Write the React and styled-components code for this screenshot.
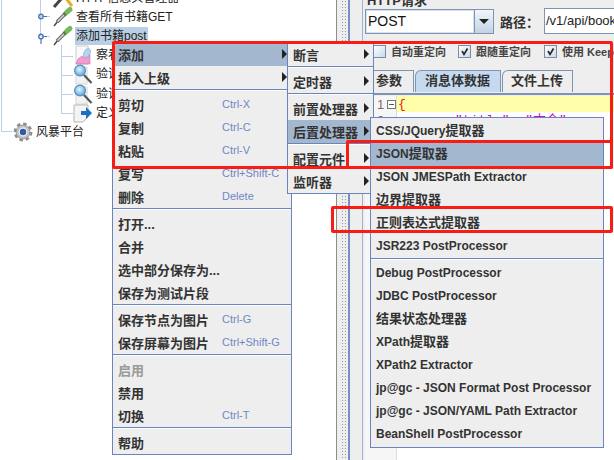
import React from 'react';
import styled, { createGlobalStyle } from 'styled-components';

const SANS = `"Liberation Sans", "Noto Sans CJK SC", sans-serif`;
const MENU_BORDER = '#6a84bf';

const Global = createGlobalStyle`
  html, body { margin: 0; padding: 0; background: #fff; overflow: hidden; }
  body { font-family: ${SANS}; }
`;

const Page = styled.div`
  position: relative;
  width: 614px;
  height: 460px;
  overflow: hidden;
  display: flex;
  background: #fff;
`;

/* left tree */
const TreePane = styled.div`
  position: relative;
  flex: none;
  background: #fff;
  border-right: 1px solid #8d8d8d;
  box-sizing: border-box;
  width: 337px;
`;
const TreeLines = styled.svg`
  position: absolute;
  left: 0;
  top: 0;
`;
const TreeList = styled.div`
  position: relative;
  margin-top: -12px;
  display: flex;
  flex-direction: column;
`;
const TreeRow = styled.div`
  display: flex;
  align-items: center;
  height: 19.2px;
  gap: 2px;
  padding-left: ${(p) => [13, 33, 53, 73][p.$depth]}px;
`;
const IconBox = styled.svg`
  width: 20px;
  height: 20px;
  flex: none;
  overflow: visible;
`;
const TreeLabel = styled.span`
  font-size: 12px;
  line-height: 18px;
  padding: 0 1px;
  color: #222;
  white-space: nowrap;
  background: ${(p) => (p.$selected ? '#b8cfe5' : 'transparent')};
`;

/* split bar */
const Splitter = styled.div`
  width: 25px;
  flex: none;
  display: flex;
  background: #eee;
`;
const SplitGrip = styled.div`
  width: 5px;
  margin-left: 4px;
  background-image: radial-gradient(#9a9a9a 0.8px, transparent 1px);
  background-size: 3px 3px;
`;
const SplitLine = styled.div`
  width: 2px;
  margin-left: 2px;
  background: #7a90c4;
`;

/* right form */
const FormPane = styled.div`
  flex: 1;
  min-width: 0;
  display: flex;
  flex-direction: column;
  background: #eee;
  padding-left: 2px;
  border-left: 1px solid #9fb2d4;
  overflow: hidden;
`;
const PaneTitle = styled.div`
  height: 8px;
  display: flex;
  align-items: flex-end;
  font-size: 13px;
  font-weight: 700;
  line-height: 15px;
  color: #333;
  padding-left: 2px;
  white-space: nowrap;
`;
const MethodRow = styled.div`
  display: flex;
  align-items: center;
  height: 26px;
`;
const ComboField = styled.div`
  width: 110px;
  height: 25px;
  flex: none;
  box-sizing: border-box;
  border: 1px solid #7f93b3;
  box-shadow: inset 0 0 0 1px #d8e2ee;
  background: #fff;
  font-size: 14px;
  line-height: 23px;
  padding-left: 2px;
  color: #111;
`;
const ComboButton = styled.div`
  width: 19px;
  height: 25px;
  flex: none;
  box-sizing: border-box;
  border: 1px solid #7f93b3;
  border-left: none;
  background: linear-gradient(#f2f6fa, #c3d3e4);
  display: flex;
  align-items: center;
  justify-content: center;
  &::after {
    content: '';
    border-left: 5px solid transparent;
    border-right: 5px solid transparent;
    border-top: 5px solid #222;
  }
`;
const PathLabel = styled.span`
  font-size: 13px;
  font-weight: 700;
  color: #333;
  margin-left: 6px;
  width: 44px;
  flex: none;
  white-space: nowrap;
`;
const PathField = styled.div`
  flex: none;
  width: 100px;
  height: 26px;
  box-sizing: border-box;
  border: 1px solid #7f93b3;
  background: #fff;
  font-size: 13px;
  line-height: 24px;
  padding-left: 1px;
  color: #222;
  white-space: nowrap;
`;
const OptionRow = styled.div`
  display: flex;
  align-items: center;
  height: 14px;
  margin-top: 10px;
  padding-left: 8px;
`;
const Option = styled.span`
  display: flex;
  align-items: center;
  gap: 5px;
  width: ${(p) => p.$width}px;
  flex: none;
  font-size: 11px;
  font-weight: 700;
  color: #444;
  white-space: nowrap;
`;
const Tick = styled.span`
  width: 13px;
  height: 13px;
  flex: none;
  box-sizing: border-box;
  border: 1px solid #7c8ca4;
  background: linear-gradient(135deg, #fff, #c9d9ea);
  display: flex;
  svg { display: block; }
`;
const TabRow = styled.div`
  display: flex;
  align-items: flex-start;
  height: 22px;
  margin-top: 12px;
  padding-bottom: 1px;
  border-bottom: 2px solid #7f93b3;
`;
const Tab = styled.div`
  height: 22px;
  box-sizing: border-box;
  width: ${(p) => p.$width}px;
  flex: none;
  margin-right: 1px;
  padding-left: ${(p) => p.$pad}px;
  border: 1px solid #7f93b3;
  border-bottom: none;
  border-top-left-radius: 6px;
  background: ${(p) => (p.$active ? '#c6daef' : '#eee')};
  font-size: 13px;
  font-weight: 700;
  line-height: 20px;
  color: #333;
  white-space: nowrap;
`;
const Editor = styled.div`
  flex: 1;
  margin-top: 1px;
  background: #fff;
  display: grid;
  grid-template-columns: 32px 1fr;
  grid-auto-rows: 16px;
  align-content: start;
  position: relative;
  overflow: hidden;
`;
const Gutter = styled.div`
  display: flex;
  align-items: center;
  gap: 3px;
  padding-left: 12px;
  font-size: 13px;
  color: #866;
  border-right: 1px solid #ddd;
  background: #f6f6f6;
`;
const FoldBox = styled.span`
  width: 7px;
  height: 7px;
  border: 1px solid #777;
  background: #fff;
  position: relative;
  &::after {
    content: '';
    position: absolute;
    left: 1px;
    right: 1px;
    top: 3px;
    height: 1px;
    background: #555;
  }
`;
const CodeLine = styled.div`
  font-family: "Liberation Mono", "Noto Sans CJK SC", monospace;
  font-size: 13px;
  line-height: 17px;
  white-space: pre;
  padding-left: ${(p) => p.$indent}px;
  color: ${(p) => p.$color};
  background: ${(p) => (p.$highlight ? '#ffffaa' : 'transparent')};
`;
const GutterFill = styled.div`
  grid-column: 1;
  grid-row: 3 / span 30;
  background: #f6f6f6;
  border-right: 1px solid #ddd;
`;

/* popup menus */
const Menu = styled.div`
  position: absolute;
  left: ${(p) => p.$left}px;
  top: ${(p) => p.$top}px;
  width: ${(p) => p.$width}px;
  box-sizing: border-box;
  display: flex;
  flex-direction: column;
  background: #eee;
  border: 1px solid ${MENU_BORDER};
  padding-top: ${(p) => p.$padTop || 0}px;
  padding-bottom: ${(p) => p.$padBottom || 0}px;
  font-family: ${SANS};
`;
const Item = styled.div`
  height: 23px;
  box-sizing: border-box;
  flex: none;
  display: flex;
  align-items: center;
  padding: 0 4px 1px 5px;
  background: ${(p) => (p.$selected ? '#a3b8cf' : 'transparent')};
  color: ${(p) => (p.$disabled ? '#999' : '#333')};
  font-size: 13px;
  font-weight: 700;
  white-space: nowrap;
`;
const LatinItem = styled(Item)`
  font-size: 12px;
  display: block;
  line-height: 22px;
`;
const CjkRun = styled.span`
  font-size: 13px;
`;
const Label = styled.span`
  width: ${(p) => (p.$fixed ? '104px' : 'auto')};
  flex: none;
`;
const Shortcut = styled.span`
  font-size: 11px;
  font-weight: 400;
  color: #6f87c6;
`;
const Arrow = styled.span`
  margin-left: auto;
  border-top: 5px solid transparent;
  border-bottom: 5px solid transparent;
  border-left: 5px solid #222;
`;
const Separator = styled.div`
  height: 4px;
  flex: none;
  box-sizing: border-box;
  border-top: 1px solid ${MENU_BORDER};
  box-shadow: inset 0 1px 0 #fff;
`;

/* red hand-drawn annotation boxes */
const RedBox = styled.div`
  position: absolute;
  left: ${(p) => p.$left}px;
  top: ${(p) => p.$top}px;
  width: ${(p) => p.$width}px;
  height: ${(p) => p.$height}px;
  box-sizing: border-box;
  border: 3px solid #f81c14;
  border-radius: 2px;
  pointer-events: none;
`;

const Pipette = () => (
  <IconBox viewBox="0 0 20 20">
    <path d="M1 19 L5 14" stroke="#444" strokeWidth="1.4" />
    <path d="M4 15 L12 7" stroke="#666" strokeWidth="3.6" />
    <path d="M4.5 14.5 L11.5 7.5" stroke="#d8d8d8" strokeWidth="1.5" />
    <path d="M11 8 L14 5" stroke="#4f7f3b" strokeWidth="4" />
    <path d="M14 5 L17 2.5" stroke="#79b75c" strokeWidth="5" strokeLinecap="round" />
  </IconBox>
);
const Hammer = () => (
  <IconBox viewBox="0 0 20 20">
    <path d="M8 4 L19 18" stroke="#e2b024" strokeWidth="3" />
    <path d="M1 19 L9 10" stroke="#444" strokeWidth="3" />
  </IconBox>
);
const ChartDoc = () => (
  <IconBox viewBox="0 0 20 20">
    <path d="M3 1 H15 V19 H3 Z" fill="#fafafa" stroke="#ccc" />
    <path d="M3 19 L5 14 L9 11 L12 13 L17 9 V19 Z" fill="#f39bd0" stroke="#b0609a" strokeWidth=".5" />
    <ellipse cx="14" cy="8" rx="3" ry="4.6" fill="#b4d8f2" stroke="#7da9cc" strokeWidth=".6" transform="rotate(25 14 8)" />
  </IconBox>
);
const Magnifier = () => (
  <IconBox viewBox="0 0 20 20">
    <defs>
      <radialGradient id="glass" cx="45%" cy="40%" r="60%">
        <stop offset="0" stopColor="#e4f6ff" />
        <stop offset="1" stopColor="#5aa9dc" />
      </radialGradient>
    </defs>
    <path d="M3 3 H14 V20 H3 Z" fill="#f2f2f2" stroke="#d6d6d6" />
    <circle cx="7" cy="6.5" r="5.4" fill="url(#glass)" stroke="#4d8fb8" strokeWidth="1.1" />
    <path d="M11 11 L18.5 19" stroke="#555" strokeWidth="2.2" />
  </IconBox>
);
const ArrowDoc = () => (
  <IconBox viewBox="0 0 20 20">
    <path d="M1 2 H15 V14 L10 19 H1 Z" fill="#f4f4f4" stroke="#b5b5b5" />
    <path d="M8 8 H13 V4 L19 10 L13 16 V12 H8 Z" fill="#1e6fc4" />
  </IconBox>
);
const Gear = () => (
  <IconBox viewBox="0 0 20 20">
    <circle cx="10" cy="10" r="7.4" fill="none" stroke="#8f8f8f" strokeWidth="4" strokeDasharray="3.2 2.6" />
    <circle cx="10" cy="10" r="7" fill="#c4c4c4" stroke="#8a8a8a" strokeWidth=".8" />
    <circle cx="10" cy="10" r="4.4" fill="#eef2f8" />
    <circle cx="10" cy="10" r="3.2" fill="#2f5aa8" />
  </IconBox>
);

const CheckMark = () => (
  <svg width="11" height="11" viewBox="0 0 11 11" fill="none">
    <path d="M3 5 L5 8.5 L8.5 2.5" stroke="#222" strokeWidth="1.6" />
  </svg>
);

const treeRows = [
  { depth: 2, Icon: Hammer, label: 'HTTP信息头管理器' },
  { depth: 2, Icon: Pipette, label: '查看所有书籍GET' },
  { depth: 2, Icon: Pipette, label: '添加书籍post', selected: true },
  { depth: 3, Icon: ChartDoc, label: '察看结果树' },
  { depth: 3, Icon: Magnifier, label: '验证响应' },
  { depth: 3, Icon: Magnifier, label: '验证响应' },
  { depth: 3, Icon: ArrowDoc, label: '定义变量' },
  { depth: 0, Icon: Gear, label: '风暴平台' },
];

const mainMenu = [
  [{ label: '添加', sub: true, selected: true }, { label: '插入上级', sub: true }],
  [
    { label: '剪切', key: 'Ctrl-X' },
    { label: '复制', key: 'Ctrl-C' },
    { label: '粘贴', key: 'Ctrl-V' },
    { label: '复写', key: 'Ctrl+Shift-C' },
    { label: '删除', key: 'Delete' },
  ],
  [{ label: '打开...' }, { label: '合并' }, { label: '选中部分保存为...' }, { label: '保存为测试片段' }],
  [
    { label: '保存节点为图片', key: 'Ctrl-G' },
    { label: '保存屏幕为图片', key: 'Ctrl+Shift-G' },
  ],
  [{ label: '启用', disabled: true }, { label: '禁用' }, { label: '切换', key: 'Ctrl-T' }],
  [{ label: '帮助' }],
];

const addMenu = [
  ['断言'],
  ['定时器'],
  ['前置处理器', '后置处理器'],
  ['配置元件', '监听器'],
];

const postMenu = [
  ['CSS/JQuery提取器', 'JSON提取器', 'JSON JMESPath Extractor', '边界提取器', '正则表达式提取器', 'JSR223 PostProcessor'],
  [
    'Debug PostProcessor',
    'JDBC PostProcessor',
    '结果状态处理器',
    'XPath提取器',
    'XPath2 Extractor',
    'jp@gc - JSON Format Post Processor',
    'jp@gc - JSON/YAML Path Extractor',
    'BeanShell PostProcessor',
  ],
];

// the Latin part of these labels is a size smaller than the Chinese part
const mixedLabel = (label) =>
  label.split(/([\u4e00-\u9fff]+)/).map((part, i) =>
    i % 2 ? <CjkRun key={i}>{part}</CjkRun> : part
  );

const App = () => (
  <Page>
    <Global />
    <TreePane>
      <TreeLines width="336" height="140" fill="none">
        <path d="M1.5 0 V131.5 H12" stroke="#b8d0e8" />
        <path d="M40.5 0 V36 M41 16.5 H50" stroke="#b8d0e8" />
        <path d="M61.5 45 V113.5 M61 56.5 H73 M61 75.5 H73 M61 94.5 H73 M61 113.5 H73" stroke="#b8d0e8" />
        <path d="M41 36.5 H50" stroke="#b8d0e8" />
        <circle cx="41" cy="16.5" r="2.2" stroke="#4f74b4" strokeWidth="1.4" />
        <path d="M44 16.5 H47" stroke="#4f74b4" />
        <circle cx="41" cy="36.5" r="2.2" stroke="#4f74b4" strokeWidth="1.4" />
        <path d="M41 39 V44 M44 36.5 H47" stroke="#4f74b4" strokeWidth="1.2" />
      </TreeLines>
      <TreeList>
        {treeRows.map(({ depth, Icon, label, selected }, i) => (
          <TreeRow key={i} $depth={depth}>
            <Icon />
            <TreeLabel $selected={selected}>{label}</TreeLabel>
          </TreeRow>
        ))}
      </TreeList>
    </TreePane>
    <Splitter>
      <SplitGrip />
      <SplitLine />
    </Splitter>
    <FormPane>
      <PaneTitle>HTTP请求</PaneTitle>
      <MethodRow>
        <ComboField>POST</ComboField>
        <ComboButton />
        <PathLabel>路径：</PathLabel>
        <PathField>/v1/api/books</PathField>
      </MethodRow>
      <OptionRow>
        <Option $width={85}>
          <Tick />
          自动重定向
        </Option>
        <Option $width={86}>
          <Tick>
            <CheckMark />
          </Tick>
          跟随重定向
        </Option>
        <Option $width={90}>
          <Tick>
            <CheckMark />
          </Tick>
          使用 KeepAlive
        </Option>
      </OptionRow>
      <TabRow>
        <Tab $width={49} $pad={10}>参数</Tab>
        <Tab $width={86} $pad={9} $active>消息体数据</Tab>
        <Tab $width={71} $pad={8}>文件上传</Tab>
      </TabRow>
      <Editor>
        <Gutter>
          1<FoldBox />
        </Gutter>
        <CodeLine $highlight $color="#e02020" $indent={1}>{'{'}</CodeLine>
        <Gutter>2</Gutter>
        <CodeLine $color="#d010c0" $indent={58}>{'"title": "本合"'}</CodeLine>
        <GutterFill />
      </Editor>
    </FormPane>

    <Menu $left={112} $top={42} $width={180}>
      {mainMenu.map((group, g) => (
        <React.Fragment key={g}>
          {g > 0 && <Separator />}
          {group.map((it) => (
            <Item key={it.label} $selected={it.selected} $disabled={it.disabled}>
              <Label $fixed={!!it.key}>{it.label}</Label>
              {it.key && <Shortcut>{it.key}</Shortcut>}
              {it.sub && <Arrow />}
            </Item>
          ))}
        </React.Fragment>
      ))}
    </Menu>
    <Menu $left={287} $top={42} $width={87}>
      {addMenu.map((group, g) => (
        <React.Fragment key={g}>
          {g > 0 && <Separator />}
          {group.map((label) => (
            <Item key={label} $selected={label === '后置处理器'}>
              <Label>{label}</Label>
              <Arrow />
            </Item>
          ))}
        </React.Fragment>
      ))}
    </Menu>
    <Menu $left={370} $top={117} $width={234} $padTop={2} $padBottom={1}>
      {postMenu.map((group, g) => (
        <React.Fragment key={g}>
          {g > 0 && <Separator />}
          {group.map((label) => (
            <LatinItem key={label} $selected={label === 'JSON提取器'}>
              {mixedLabel(label)}
            </LatinItem>
          ))}
        </React.Fragment>
      ))}
    </Menu>

    <RedBox $left={112} $top={41} $width={501} $height={128} />
    <RedBox $left={346} $top={140} $width={267} $height={29} />
    <RedBox $left={331} $top={206} $width={282} $height={27} />
  </Page>
);

export default App;
